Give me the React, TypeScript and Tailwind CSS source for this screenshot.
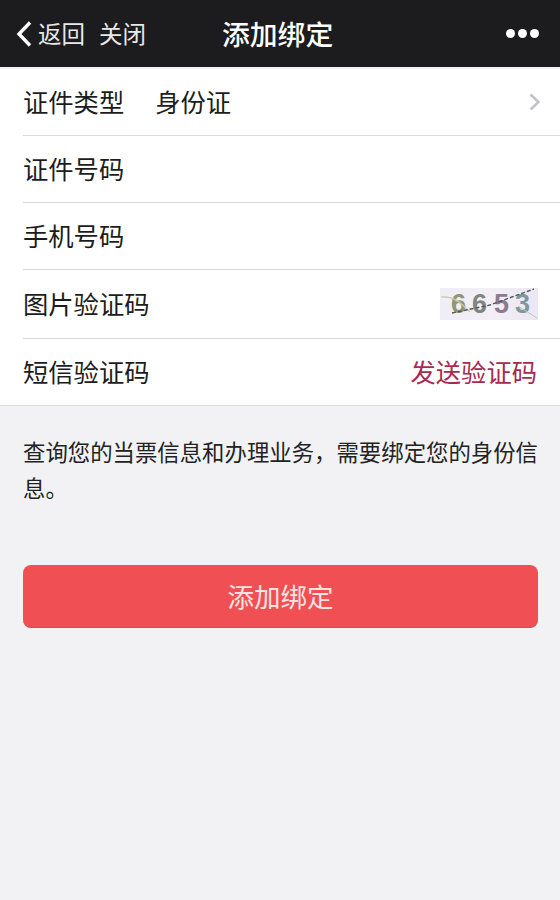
import React from 'react';

const font = { fontFamily: '"Noto Sans CJK SC", "Liberation Sans", sans-serif' };

const Captcha = () => (
  <svg width="98" height="32" viewBox="0 0 98 32">
    <defs>
      <linearGradient id="captcha-bg" x1="0" x2="1" y1="0" y2="0">
        <stop offset="0" stopColor="#efedf6" />
        <stop offset="0.5" stopColor="#f3eff5" />
        <stop offset="1" stopColor="#ebe7f3" />
      </linearGradient>
    </defs>
    <rect width="98" height="32" fill="url(#captcha-bg)" />
    <text x="11" y="25" fontSize="27" fontWeight="700" fontFamily="Liberation Sans" fill="#8f9672">6</text>
    <text x="32" y="25" fontSize="27" fontWeight="700" fontFamily="Liberation Sans" fill="#7f8580">6</text>
    <text x="54" y="25" fontSize="27" fontWeight="700" fontFamily="Liberation Sans" fill="#8d7a90">5</text>
    <text x="75" y="25" fontSize="27" fontWeight="700" fontFamily="Liberation Sans" fill="#7d96a0">3</text>
    <path d="M1 9 C 14 8, 20 14, 30 24" stroke="#c6c9a8" strokeWidth="1.2" fill="none" />
    <path d="M12 25 L 50 17 L 94 1" stroke="#555" strokeWidth="1.4" strokeDasharray="4 2" fill="none" />
    <path d="M78 18 L 97 30" stroke="#b7c9b7" strokeWidth="1" fill="none" />
  </svg>
);

const Row = ({ children, last }: { children: React.ReactNode; last?: boolean }) => (
  <div className={`flex items-center justify-between pr-[23px] text-[25.3px] text-[#1c1c1c] ${last ? 'h-[66px]' : 'h-[67px] border-b border-[#dcdcdc]'}`}>
    {children}
  </div>
);

export default function App() {
  return (
    <div className="w-[560px] h-[900px] bg-[#f2f2f4] overflow-hidden" style={font}>
      <div className="h-[67px] bg-[#1c1c1e] flex items-center relative text-white">
        <svg width="18" height="28" viewBox="0 0 18 28" className="ml-[15px]">
          <path d="M15 2.5 L4 14 L15 25.5" stroke="#fff" strokeWidth="3.4" fill="none" />
        </svg>
        <span className="ml-[5px] text-[23.5px] text-[#e8e8e8] leading-none">返回</span>
        <span className="ml-[14px] text-[23.5px] text-[#e8e8e8] leading-none">关闭</span>
        <div className="absolute left-[222px] text-[27.8px] font-medium leading-none">添加绑定</div>
        <div className="ml-auto mr-[21px] flex gap-[3px]">
          <span className="w-[9px] h-[9px] rounded-full bg-white" />
          <span className="w-[9px] h-[9px] rounded-full bg-white" />
          <span className="w-[9px] h-[9px] rounded-full bg-white" />
        </div>
      </div>
      <div className="mt-[2px] bg-white pl-[23px] border-b border-[#dcdcdc]">
        <Row>
          <div className="flex">
            <span>证件类型</span>
            <span className="ml-[31px]">身份证</span>
          </div>
          <svg width="14" height="20" viewBox="0 0 14 20" className="mr-[-5px]">
            <path d="M2.5 2.5 L10.5 10 L2.5 17.5" stroke="#c4c4c8" strokeWidth="2.6" fill="none" />
          </svg>
        </Row>
        <Row>证件号码</Row>
        <Row>手机号码</Row>
        <div className="h-[69px] flex items-center justify-between pr-[22px] text-[25.3px] text-[#1c1c1c] border-b border-[#dcdcdc]">
          图片验证码
          <Captcha />
        </div>
        <Row last>
          短信验证码
          <span className="text-[#a82a4f]">发送验证码</span>
        </Row>
      </div>
      <p className="mt-[27px] pl-[23px] pr-[20px] text-[22.4px] leading-[36px] text-[#222]">
        查询您的当票信息和办理业务，需要绑定您的身份信息。
      </p>
      <button className="mt-[60px] mx-[23px] w-[515px] h-[63px] flex items-center justify-center rounded-[8px] bg-[#f05053] border-b border-[#c95055] text-[26.5px] text-[#fbe3e3]">
        添加绑定
      </button>
    </div>
  );
}
